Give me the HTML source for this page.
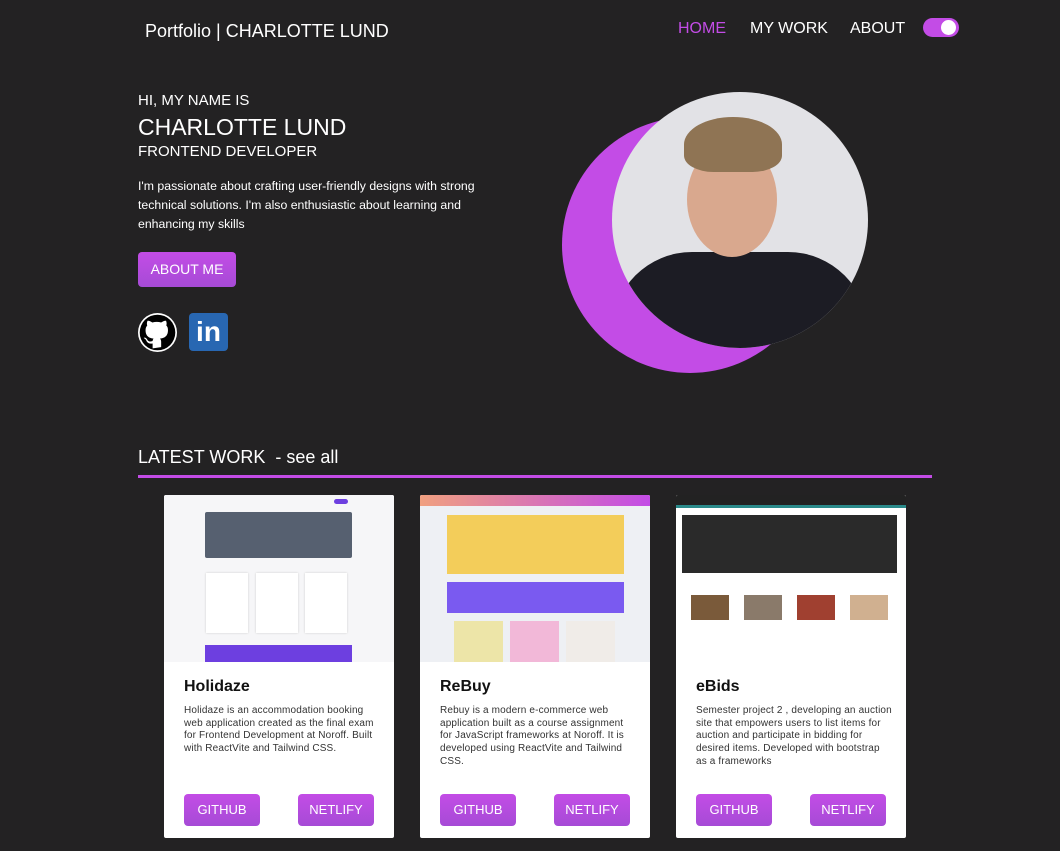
<!DOCTYPE html>
<html><head><meta charset="utf-8"><style>
*{margin:0;padding:0;box-sizing:border-box}
body{width:1060px;height:851px;overflow:hidden;background:#232223;font-family:"Liberation Sans",sans-serif;color:#fff;position:relative}
.abs{position:absolute}
.nav a{position:absolute;top:20px;font-size:16px;color:#fff;text-decoration:none}
.btn{position:absolute;background:linear-gradient(#c34ce6,#a64bd6);border-radius:4px;color:#fff;font-size:13px;text-align:center}
.card{position:absolute;top:495px;width:230px;height:343px;background:#fff;border-radius:2px;overflow:hidden;color:#111}
.card .img{height:167px;background:#eef0f4;position:relative;overflow:hidden}
.card h3{position:absolute;left:20px;top:183px;font-size:16px;font-weight:bold}
.card p{position:absolute;left:20px;top:210px;width:196px;font-size:10px;letter-spacing:0.15px;line-height:12.7px;color:#333}
.card .b1{left:20px;top:299px;width:76px;height:32px;line-height:32px}
.card .b2{left:134px;top:299px;width:76px;height:32px;line-height:32px}
</style></head><body>
<div class="abs" style="left:145px;top:21px;font-size:18px">Portfolio | CHARLOTTE LUND</div>
<div class="nav"><a style="left:678px;color:#c34ce6">HOME</a><a style="left:750px">MY WORK</a><a style="left:850px">ABOUT</a></div>
<div class="abs" style="left:923px;top:18px;width:36px;height:19px;border-radius:10px;background:#c34ce6"><div style="position:absolute;right:3px;top:2px;width:15px;height:15px;border-radius:50%;background:#fff"></div></div>

<div class="abs" style="left:138px;top:92px;font-size:15px">HI, MY NAME IS</div>
<div class="abs" style="left:138px;top:114px;font-size:23px">CHARLOTTE LUND</div>
<div class="abs" style="left:138px;top:143px;font-size:15px">FRONTEND DEVELOPER</div>
<div class="abs" style="left:138px;top:177px;width:380px;font-size:12.3px;line-height:19px">I'm passionate about crafting user-friendly designs with strong technical solutions. I'm also enthusiastic about learning and enhancing my skills</div>
<div class="btn" style="left:138px;top:252px;width:98px;height:35px;line-height:35px;font-size:14px">ABOUT ME</div>
<div class="abs" style="left:138px;top:313px;width:39px;height:39px;border-radius:50%;background:#fff">
<svg width="39" height="39" viewBox="0 0 16 16"><circle cx="8" cy="8" r="7.3" fill="#000"/><path fill="#fff" d="M6 14.5v-2c-2 .4-2.5-1-2.5-1-.3-.8-.8-1-.8-1-.7-.4 0-.4 0-.4.7 0 1.1.8 1.1.8.6 1.1 1.7.8 2.2.6 0-.5.2-.8.4-1-1.6-.2-3.300-.8-3.300-3.500 0-.8.3-1.400.7-1.900-.1-.2-.3-.9.1-1.900 0 0 .6-.2 2 .7a6.8 6.8 0 0 1 3.6 0c1.4-.9 2-.7 2-.7.4 1 .2 1.7.1 1.9.5.5.7 1.1.7 1.9 0 2.7-1.7 3.3-3.3 3.5.3.2.5.7.5 1.3v2.2z"/></svg></div>
<div class="abs" style="left:189px;top:313px;width:39px;height:38px;border-radius:4px;background:#2867b2;font-weight:bold;font-size:28px;line-height:38px;text-align:center">in</div>

<div class="abs" style="left:562px;top:117px;width:256px;height:256px;border-radius:50%;background:#c34ce6"></div>
<div class="abs" style="left:612px;top:92px;width:256px;height:256px;border-radius:50%;overflow:hidden;background:#e2e2e6">
<div class="abs" style="left:0;top:160px;width:256px;height:120px;background:#1c1c24;border-radius:80px 80px 0 0"></div>
<div class="abs" style="left:75px;top:50px;width:90px;height:115px;border-radius:50%;background:#d9a88e"></div>
<div class="abs" style="left:72px;top:25px;width:98px;height:55px;border-radius:50% 50% 30% 30%;background:#8f7454"></div>
</div>

<div class="abs" style="left:138px;top:447px;font-size:18px">LATEST WORK &nbsp;- see all</div>
<div class="abs" style="left:138px;top:475px;width:794px;height:3px;background:#c34ce6"></div>

<div class="card" style="left:164px"><div class="img" style="background:#f6f6f8">
<div class="abs" style="left:170px;top:4px;width:14px;height:5px;border-radius:3px;background:#6d3fe0"></div>
<div class="abs" style="left:41px;top:17px;width:147px;height:46px;background:#566070;border-radius:2px"></div>
<div class="abs" style="left:42px;top:78px;width:42px;height:60px;background:#fff;box-shadow:0 0 2px #ccc"></div>
<div class="abs" style="left:92px;top:78px;width:42px;height:60px;background:#fff;box-shadow:0 0 2px #ccc"></div>
<div class="abs" style="left:141px;top:78px;width:42px;height:60px;background:#fff;box-shadow:0 0 2px #ccc"></div>
<div class="abs" style="left:41px;top:150px;width:147px;height:20px;background:#6d3fe0"></div></div>
<h3>Holidaze</h3><p>Holidaze is an accommodation booking web application created as the final exam for Frontend Development at Noroff. Built with ReactVite and Tailwind CSS.</p>
<div class="btn b1">GITHUB</div><div class="btn b2">NETLIFY</div></div>

<div class="card" style="left:420px"><div class="img">
<div class="abs" style="left:0;top:0;width:230px;height:11px;background:linear-gradient(90deg,#f0a080,#c34ce6)"></div>
<div class="abs" style="left:27px;top:20px;width:177px;height:59px;background:#f3cd5a"></div>
<div class="abs" style="left:27px;top:87px;width:177px;height:31px;background:#7a5af0"></div>
<div class="abs" style="left:34px;top:126px;width:49px;height:41px;background:#ede5a8"></div>
<div class="abs" style="left:90px;top:126px;width:49px;height:41px;background:#f2b8d8"></div>
<div class="abs" style="left:146px;top:126px;width:49px;height:41px;background:#f0ece8"></div></div>
<h3>ReBuy</h3><p>Rebuy is a modern e-commerce web application built as a course assignment for JavaScript frameworks at Noroff. It is developed using ReactVite and Tailwind CSS.</p>
<div class="btn b1">GITHUB</div><div class="btn b2">NETLIFY</div></div>

<div class="card" style="left:676px"><div class="img" style="background:#fff">
<div class="abs" style="left:0;top:0;width:230px;height:10px;background:#222"></div>
<div class="abs" style="left:0;top:10px;width:230px;height:3px;background:#2a8a8a"></div>
<div class="abs" style="left:6px;top:20px;width:215px;height:58px;background:#2a2a2a"></div>
<div class="abs" style="left:15px;top:100px;width:38px;height:25px;background:#7a5a3a"></div>
<div class="abs" style="left:68px;top:100px;width:38px;height:25px;background:#8a7a6a"></div>
<div class="abs" style="left:121px;top:100px;width:38px;height:25px;background:#a04030"></div>
<div class="abs" style="left:174px;top:100px;width:38px;height:25px;background:#d0b090"></div></div>
<h3>eBids</h3><p>Semester project 2 , developing an auction site that empowers users to list items for auction and participate in bidding for desired items. Developed with bootstrap as a frameworks</p>
<div class="btn b1">GITHUB</div><div class="btn b2">NETLIFY</div></div>
</body></html>
